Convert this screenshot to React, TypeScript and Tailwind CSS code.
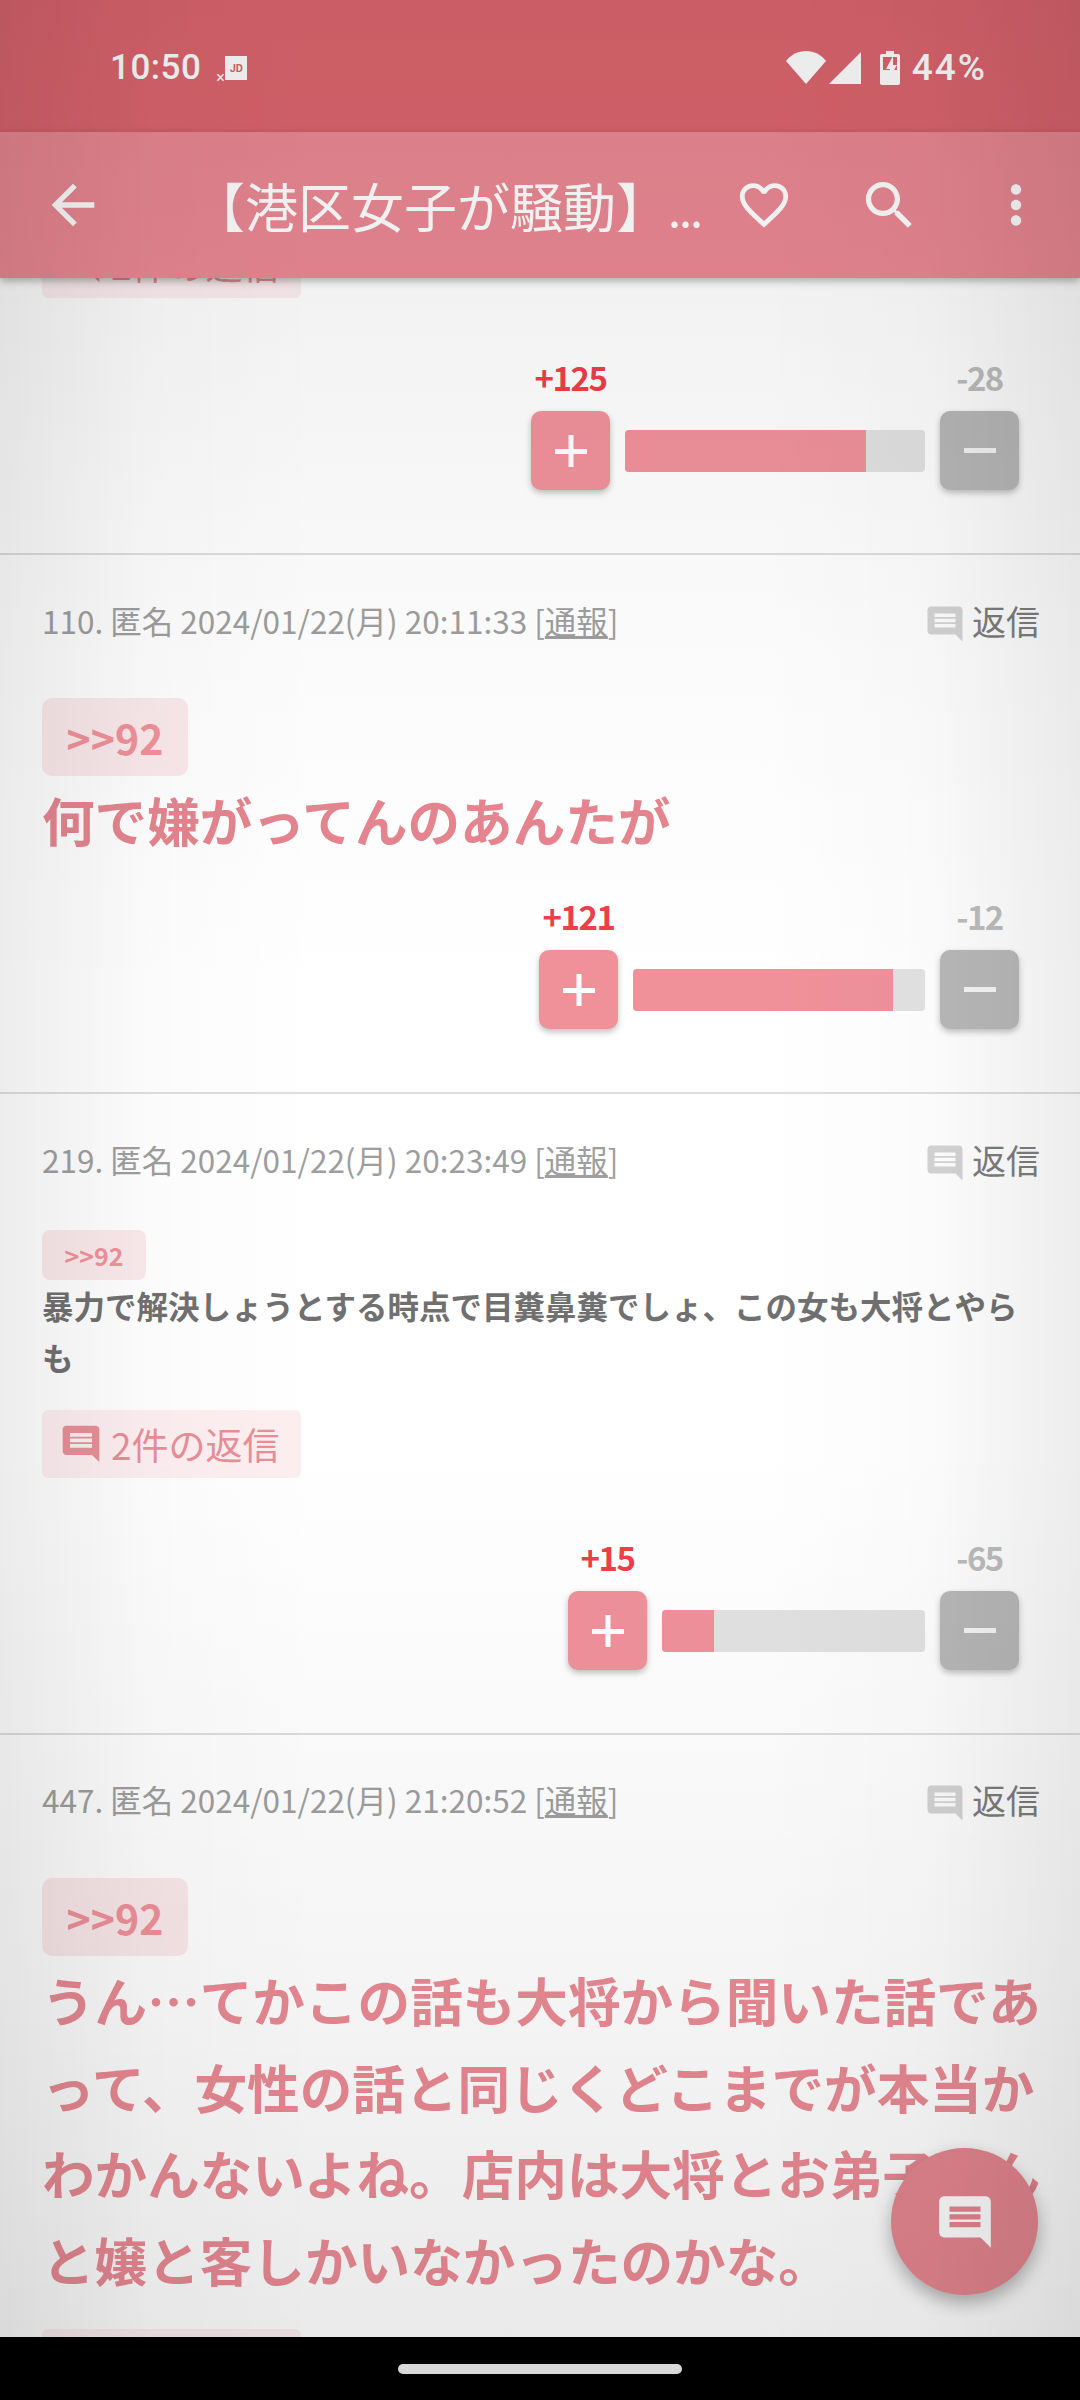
import React from 'react';

const commentPath =
  'M21.99 4c0-1.1-.89-2-1.99-2H4c-1.1 0-2 .9-2 2v12c0 1.1.9 2 2 2h14l4 4-.01-18zM18 14H6v-2h12v2zm0-3H6V9h12v2zm0-3H6V6h12v2z';

function ReplyCount() {
  return (
    <div className="flex h-[68px] w-[259px] items-center rounded-[6px] bg-[#fdeef0] pl-[17px]">
      <svg viewBox="0 0 24 24" className="h-[44px] w-[44px] fill-[#e88e97]">
        <path d={commentPath} />
      </svg>
      <span className="ml-[8px] text-[37px] leading-none text-[#e88e97]">2件の返信</span>
    </div>
  );
}

function Votes(props: {
  plus: string;
  minus: string;
  barClass: string;
  fillClass: string;
  topClass: string;
}) {
  return (
    <div className={`flex items-end justify-end pr-[61px] ${props.topClass}`}>
      <div className="flex w-[79px] flex-col items-center">
        <span className="mb-[12px] h-[44px] text-[33px] leading-[44px] font-bold tracking-[-1.5px] whitespace-nowrap text-[#ee3f49]">
          {props.plus}
        </span>
        <div className="flex h-[79px] w-[79px] items-center justify-center rounded-[10px] bg-[#f0919a] shadow-[0_3px_6px_rgba(0,0,0,0.25)]">
          <svg viewBox="0 0 32 32" className="h-[32px] w-[32px] fill-white">
            <rect x="0" y="14" width="32" height="5" />
            <rect x="13.5" y="0" width="5" height="32" />
          </svg>
        </div>
      </div>
      <div
        className={`mr-[15px] mb-[18px] ml-[15px] h-[42px] overflow-hidden rounded-[4px] bg-[#e2e2e2] ${props.barClass}`}
      >
        <div className={`h-full bg-[#f0919a] ${props.fillClass}`} />
      </div>
      <div className="flex w-[79px] flex-col items-center">
        <span className="mb-[12px] h-[44px] text-[33px] leading-[44px] font-bold tracking-[-1.5px] text-[#bdbdbd]">
          {props.minus}
        </span>
        <div className="flex h-[79px] w-[79px] items-center justify-center rounded-[10px] bg-[#b8b8b8] shadow-[0_3px_6px_rgba(0,0,0,0.25)]">
          <div className="h-[5px] w-[32px] bg-[#f5f5f5]" />
        </div>
      </div>
    </div>
  );
}

function Meta(props: { text: string }) {
  return (
    <div className="flex h-[48px] items-center justify-between pr-[40px] pb-[3px] pl-[42px]">
      <span className="text-[31.5px] leading-[45px] whitespace-nowrap text-[#9e9e9e]">
        {props.text} [<span className="underline">通報</span>]
      </span>
      <span className="flex items-center">
        <svg viewBox="0 0 24 24" className="mt-[6px] h-[42px] w-[42px] fill-[#d4d4d4]">
          <path d={commentPath} />
        </svg>
        <span className="ml-[6px] text-[34px] leading-none text-[#7d7d7d]">返信</span>
      </span>
    </div>
  );
}

function BigTag() {
  return (
    <div className="ml-[42px] flex h-[78px] w-[146px] items-center justify-center rounded-[10px] bg-[#fbe9eb] text-[41px] leading-none font-bold text-[#f0919a]">
      &gt;&gt;92
    </div>
  );
}

export default function App() {
  return (
    <div
      className="relative flex h-[2400px] w-[1080px] flex-col overflow-hidden bg-white"
      style={{ fontFamily: '"Noto Sans CJK JP", sans-serif' }}
    >
      {/* status bar */}
      <div
        className="relative z-10 flex h-[132px] items-center bg-[#dc656e] pt-[4px] pr-[93px] pl-[110px] text-white"
        style={{ fontFamily: 'Roboto, sans-serif' }}
      >
        <span className="text-[35px] font-medium tracking-[0.5px]">10:50</span>
        <div className="relative ml-[24px] flex h-[24px] w-[22px] items-center justify-center bg-white">
          <span className="text-[11px] leading-none font-bold text-[#dc656e]">JD</span>
          <span className="absolute -bottom-[6px] -left-[9px] text-[16px] leading-none">×</span>
        </div>
        <div className="ml-auto flex items-center">
          <svg viewBox="0 0 40 34" className="h-[34px] w-[40px] fill-white">
            <path d="M0 10C5 3.500 12 0 20 0s15 3.500 20 10L20 33z" />
          </svg>
          <svg viewBox="0 0 32 32" className="ml-[3px] h-[32px] w-[32px] fill-white">
            <path d="M32 0v32H0z" />
          </svg>
          <svg viewBox="0 0 20 34" className="ml-[19px] h-[34px] w-[20px]">
            <path
              className="fill-white"
              d="M6 0h8v3h4c1.200 0 2 .8 2 2v27c0 1.200-.8 2-2 2H2c-1.200 0-2-.8-2-2V5c0-1.200.8-2 2-2h4z"
            />
            <path className="fill-[#dc656e]" d="M3 6h14v13H3z" />
            <path className="fill-white" d="M13 5 6 18h4l-1 10 8-14h-4z" />
          </svg>
          <span className="ml-[12px] text-[37px] font-medium tracking-[2px]">44%</span>
        </div>
      </div>

      {/* toolbar */}
      <div className="relative z-10 flex h-[146px] items-center bg-[#ea8893] pl-[41px] text-white shadow-[0_3px_8px_rgba(0,0,0,0.3)]">
        <svg viewBox="0 0 24 24" className="h-[64px] w-[64px] fill-white">
          <path d="M20 11H7.830l5.590-5.590L12 4l-8 8 8 8 1.410-1.410L7.830 13H20v-2z" />
        </svg>
        <div className="ml-[87px] w-[543px] text-[53px] leading-none whitespace-nowrap">
          【港区女子が騒動】<span className="text-[34px] font-bold">...</span>
        </div>
        <svg viewBox="0 0 24 24" className="h-[58px] w-[58px] fill-white">
          <path d="M16.500 3c-1.740 0-3.410.81-4.500 2.090C10.910 3.810 9.240 3 7.500 3 4.420 3 2 5.420 2 8.500c0 3.780 3.400 6.860 8.550 11.540L12 21.350l1.450-1.320C18.600 15.360 22 12.280 22 8.500 22 5.420 19.580 3 16.500 3zm-4.400 15.550l-.1.1-.1-.1C7.140 14.240 4 11.390 4 8.500 4 6.500 5.500 5 7.500 5c1.540 0 3.040.99 3.570 2.360h1.870C13.460 5.990 14.960 5 16.500 5c2 0 3.500 1.500 3.500 3.500 0 2.890-3.140 5.740-7.900 10.050z" />
        </svg>
        <svg viewBox="0 0 24 24" className="ml-[65px] h-[63px] w-[63px] fill-white">
          <path d="M15.500 14h-.79l-.28-.27C15.410 12.590 16 11.110 16 9.500 16 5.910 13.090 3 9.500 3S3 5.910 3 9.500 5.910 16 9.500 16c1.610 0 3.090-.59 4.230-1.570l.27.28v.79l5 4.990L20.490 19l-4.990-5zm-6 0C7.010 14 5 11.990 5 9.500S7.010 5 9.500 5 14 7.010 14 9.500 11.990 14 9.500 14z" />
        </svg>
        <svg viewBox="0 0 24 24" className="ml-[64px] h-[62px] w-[62px] fill-white">
          <path d="M12 8c1.100 0 2-.9 2-2s-.9-2-2-2-2 .9-2 2 .9 2 2 2zm0 2c-1.100 0-2 .9-2 2s.9 2 2 2 2-.9 2-2-.9-2-2-2zm0 6c-1.100 0-2 .9-2 2s.9 2 2 2 2-.9 2-2-.9-2-2-2z" />
        </svg>
      </div>

      {/* comment list */}
      <div className="flex-1 overflow-hidden">
        <div className="-mt-[48px]">
          <div className="border-b-2 border-[#dedede] pb-[63px]">
            <div className="ml-[42px]">
              <ReplyCount />
            </div>
            <Votes
              plus="+125"
              minus="-28"
              barClass="w-[300px]"
              fillClass="w-[241px]"
              topClass="mt-[57px]"
            />
          </div>

          <div className="border-b-2 border-[#dedede] pt-[43px] pb-[63px]">
            <Meta text="110. 匿名 2024/01/22(月) 20:11:33" />
            <div className="mt-[52px]">
              <BigTag />
            </div>
            <p className="px-[42px] text-[52.6px] leading-[87px] font-bold text-[#e5858f]">
              何で嫌がってんのあんたが
            </p>
            <Votes
              plus="+121"
              minus="-12"
              barClass="w-[292px]"
              fillClass="w-[260px]"
              topClass="mt-[31px]"
            />
          </div>

          <div className="border-b-2 border-[#dedede] pt-[43px] pb-[63px]">
            <Meta text="219. 匿名 2024/01/22(月) 20:23:49" />
            <div className="mt-[45px] ml-[42px] flex h-[50px] w-[104px] items-center justify-center rounded-[8px] bg-[#fbe9eb] text-[25px] leading-none font-bold text-[#f0919a]">
              &gt;&gt;92
            </div>
            <p className="-mt-[1px] px-[42px] text-[31.5px] leading-[52px] font-bold text-[#707070]">
              暴力で解決しょうとする時点で目糞鼻糞でしょ、この女も大将とやらも
            </p>
            <div className="mt-[27px] ml-[42px]">
              <ReplyCount />
            </div>
            <Votes
              plus="+15"
              minus="-65"
              barClass="w-[263px]"
              fillClass="w-[52px]"
              topClass="mt-[57px]"
            />
          </div>

          <div className="pt-[42px]">
            <Meta text="447. 匿名 2024/01/22(月) 21:20:52" />
            <div className="mt-[53px]">
              <BigTag />
            </div>
            <p className="pr-[30px] pl-[42px] text-[52.6px] leading-[86.7px] font-bold text-[#ea8a94]">
              うん…てかこの話も大将から聞いた話であって、女性の話と同じくどこまでが本当かわかんないよね。店内は大将とお弟子さんと嬢と客しかいなかったのかな。
            </p>
            <div className="mt-[26px] ml-[42px]">
              <ReplyCount />
            </div>
          </div>
        </div>
      </div>

      {/* compose button */}
      <div className="absolute top-[2148px] left-[891px] z-20 flex h-[147px] w-[147px] items-center justify-center rounded-full bg-[#e5868f] shadow-[0_8px_18px_rgba(0,0,0,0.3)]">
        <svg viewBox="0 0 24 24" className="h-[62px] w-[62px] fill-white">
          <path d={commentPath} />
        </svg>
      </div>

      {/* edge shading of the whole screen */}
      <div className="pointer-events-none absolute inset-0 z-20 bg-[linear-gradient(180deg,rgba(0,0,0,0.08)_0%,rgba(0,0,0,0.05)_12%,rgba(0,0,0,0.015)_28%,transparent_42%,transparent_60%,rgba(0,0,0,0.04)_82%,rgba(0,0,0,0.09)_100%)]" />
      <div className="pointer-events-none absolute inset-0 z-20 bg-[linear-gradient(90deg,rgba(0,0,0,0.07)_0%,rgba(0,0,0,0.015)_14%,transparent_30%,transparent_70%,rgba(0,0,0,0.015)_86%,rgba(0,0,0,0.07)_100%)]" />

      {/* gesture bar */}
      <div className="relative z-30 flex h-[63px] items-center justify-center bg-black">
        <div className="h-[10px] w-[284px] rounded-full bg-[#d9d9d9]" />
      </div>
    </div>
  );
}
